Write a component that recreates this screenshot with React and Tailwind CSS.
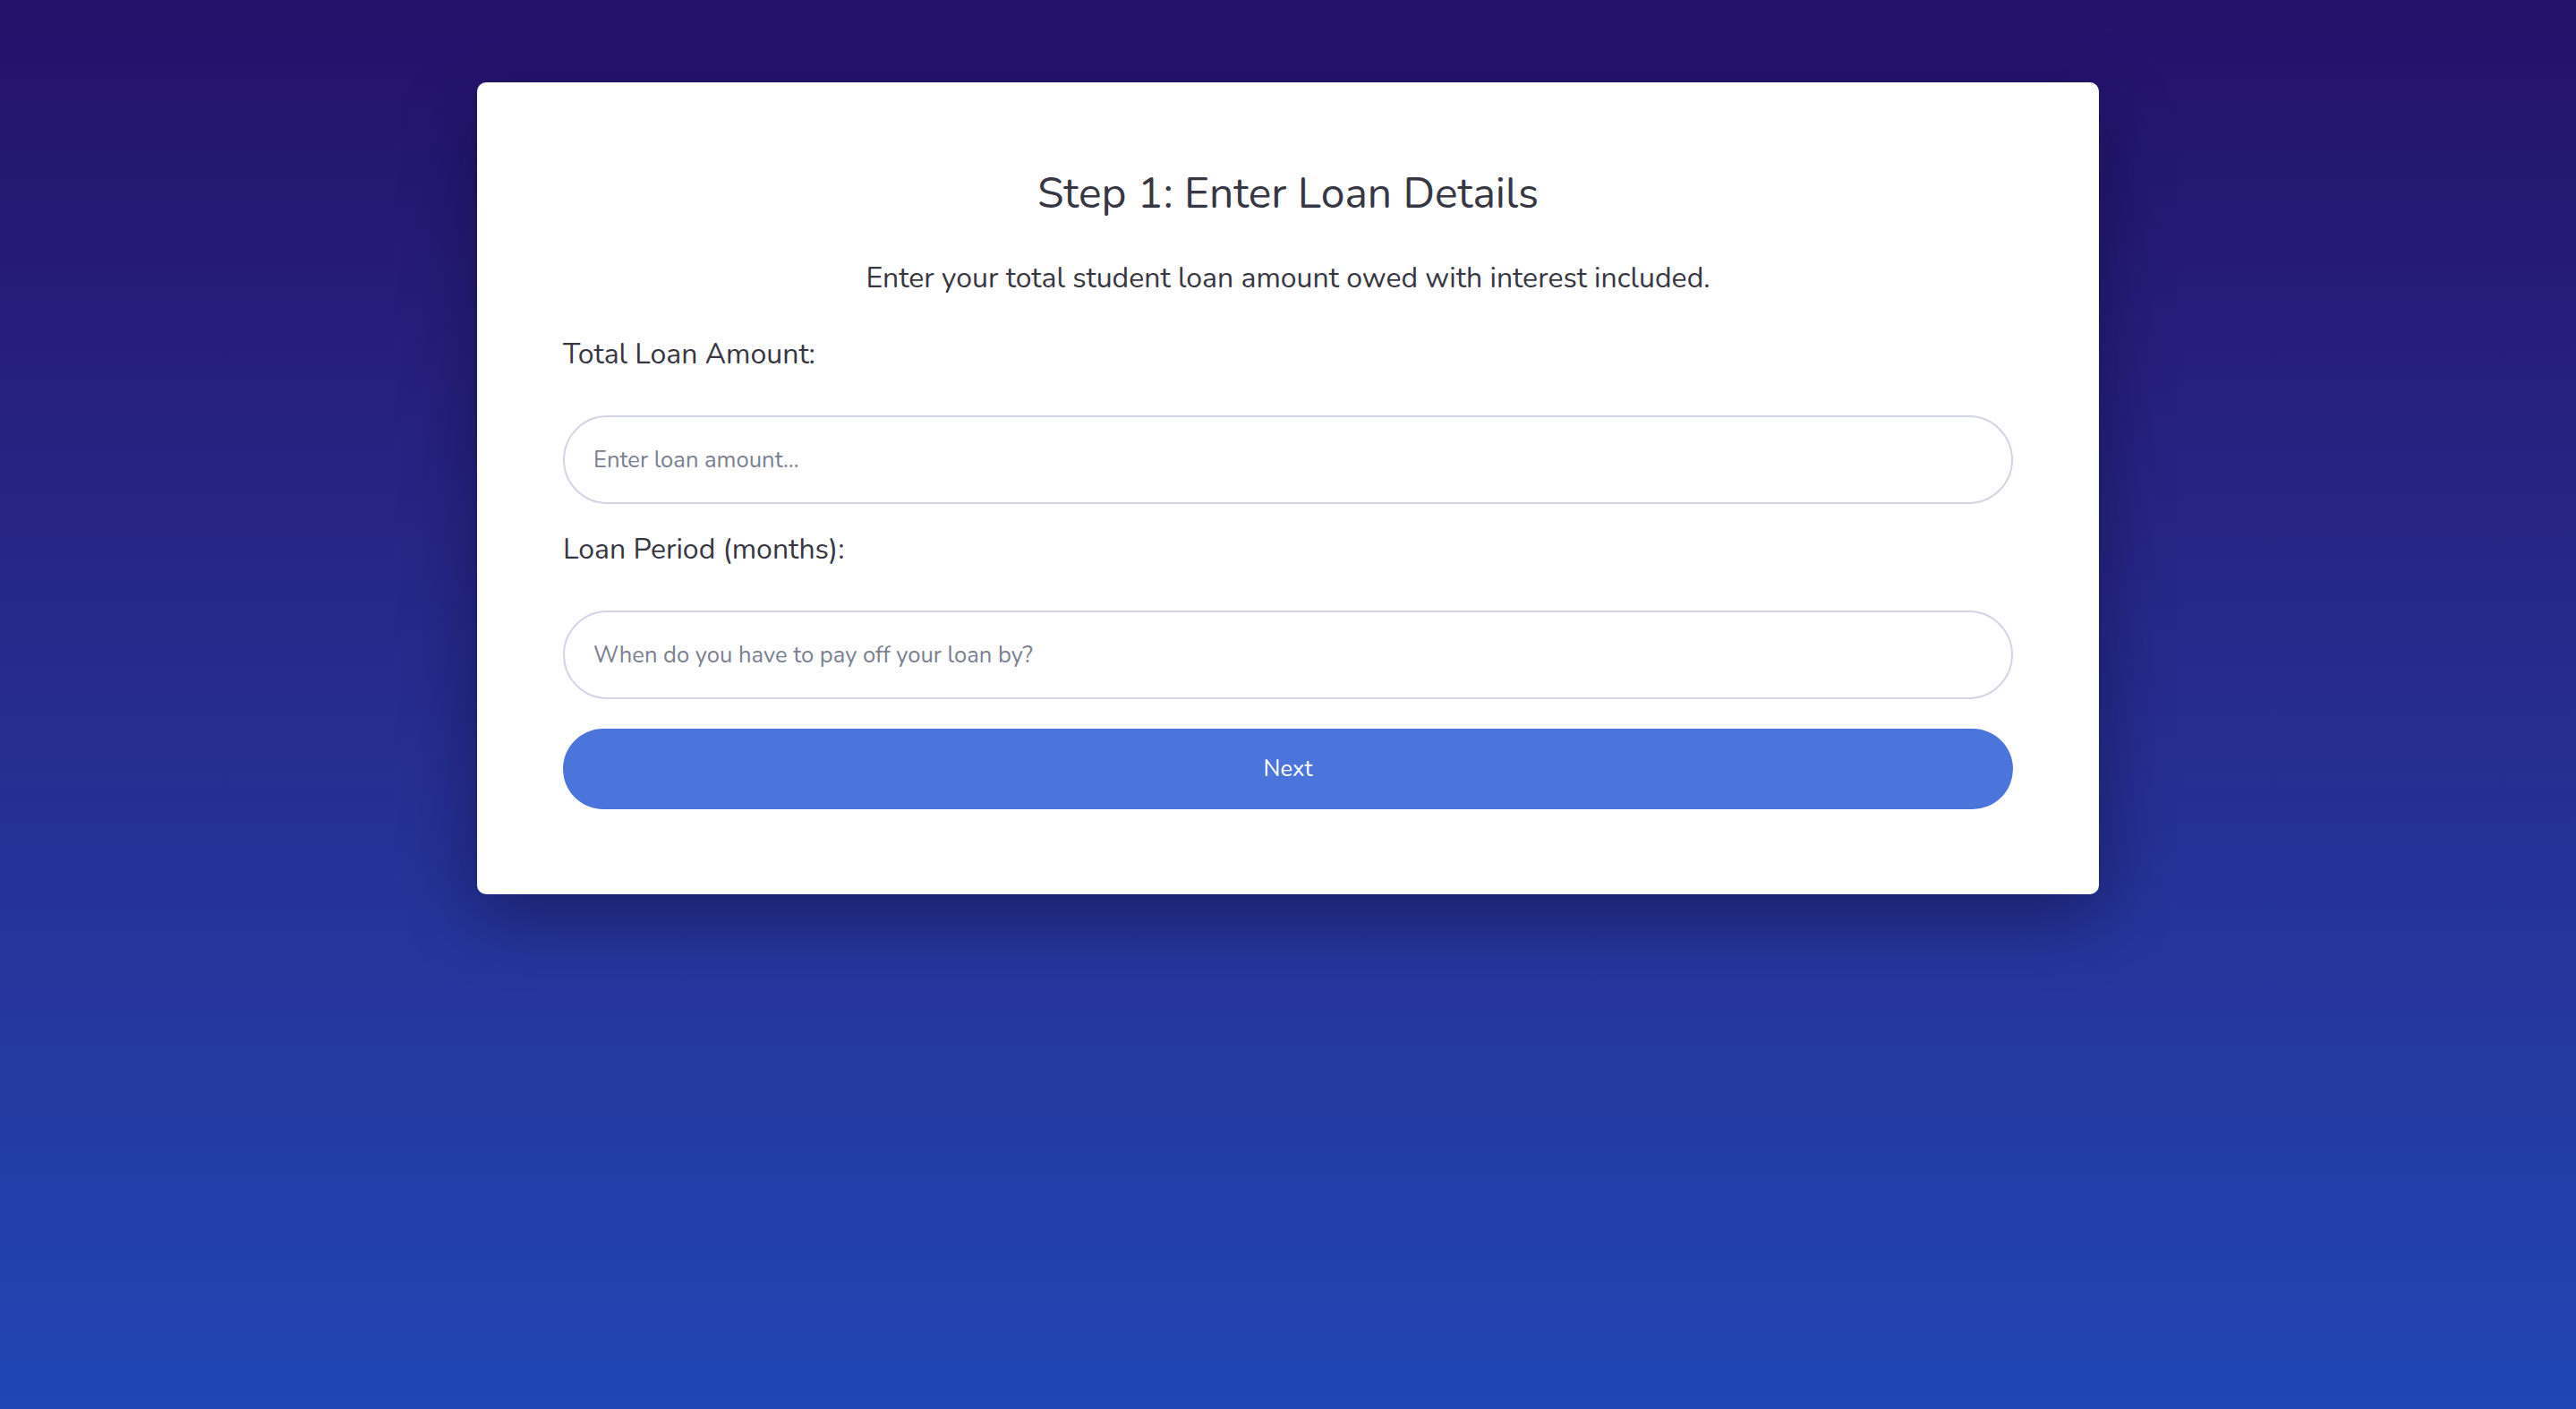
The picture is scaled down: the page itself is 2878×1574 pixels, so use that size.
import { useState } from "react";

export default function App() {
  const [amount, setAmount] = useState("");
  const [months, setMonths] = useState("");

  const font = { fontFamily: "Nunito, Lato, 'Open Sans', sans-serif" };

  return (
    <div
      className="min-h-screen w-full bg-linear-to-b from-[#24116a] to-[#2046b4] pt-[92px]"
      style={font}
    >
      <div className="mx-auto w-[1812px] rounded-[10px] bg-white px-[96px] pt-[96px] pb-[95px] shadow-[0_24px_80px_rgba(8,6,40,0.45)]">
        <h1 className="text-center text-[48px] leading-[1.2] font-normal text-[#373743]">
          Step 1: Enter Loan Details
        </h1>
        <p className="mt-[46px] text-center text-[32px] leading-[1.2] text-[#373743]">
          Enter your total student loan amount owed with interest included.
        </p>
        <form onSubmit={(e) => e.preventDefault()}>
          <label htmlFor="amount" className="mt-[47px] block text-[32px] leading-[1.2] text-[#373743]">
            Total Loan Amount:
          </label>
          <input
            id="amount"
            type="text"
            value={amount}
            onChange={(e) => setAmount(e.target.value)}
            placeholder="Enter loan amount..."
            className="mt-[49px] block h-[99px] w-full rounded-full border-2 border-[#d2d5e4] px-[32px] text-[25.6px] text-[#373743] placeholder:text-[#7b7f91] outline-none"
          />
          <label htmlFor="months" className="mt-[32px] block text-[32px] leading-[1.2] text-[#373743]">
            Loan Period (months):
          </label>
          <input
            id="months"
            type="text"
            value={months}
            onChange={(e) => setMonths(e.target.value)}
            placeholder="When do you have to pay off your loan by?"
            className="mt-[48px] block h-[99px] w-full rounded-full border-2 border-[#d2d5e4] px-[32px] text-[25.6px] text-[#373743] placeholder:text-[#7b7f91] outline-none"
          />
          <button
            type="submit"
            className="mt-[33px] block h-[90px] w-full rounded-full bg-[#4c75dc] text-[25.6px] text-white"
          >
            Next
          </button>
        </form>
      </div>
    </div>
  );
}
